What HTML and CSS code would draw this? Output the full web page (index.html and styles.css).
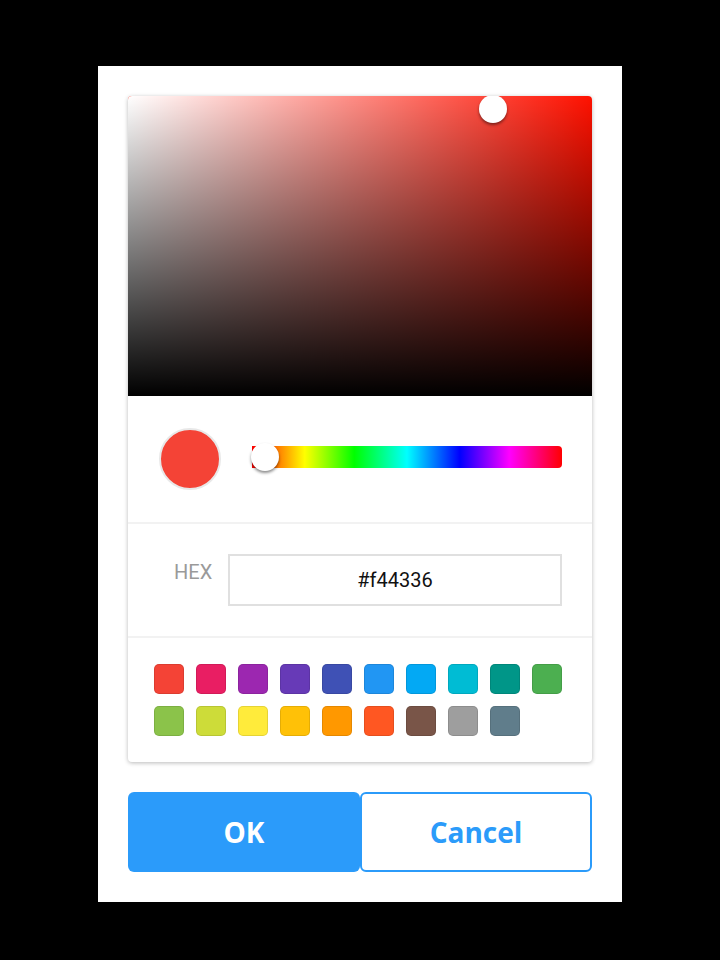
FILE: index.html
```html
<!DOCTYPE html>
<html>
<head>
<meta charset="utf-8">
<link rel="stylesheet" href="styles.css">
</head>
<body>
<div class="dialog">
  <div class="card">
    <div class="sv">
      <div class="sv-white"></div>
      <div class="sv-black"></div>
      <div class="sv-thumb"></div>
    </div>
    <div class="hue-row">
      <div class="preview"></div>
      <div class="hue-wrap">
        <div class="hue-track"></div>
        <div class="hue-thumb"></div>
      </div>
    </div>
    <div class="hex-row">
      <span class="hex-label">HEX</span>
      <div class="hex-input">#f44336</div>
    </div>
    <div class="swatches">
      <span class="sw" style="background:#f44336"></span>
      <span class="sw" style="background:#e91e63"></span>
      <span class="sw" style="background:#9c27b0"></span>
      <span class="sw" style="background:#673ab7"></span>
      <span class="sw" style="background:#3f51b5"></span>
      <span class="sw" style="background:#2196f3"></span>
      <span class="sw" style="background:#03a9f4"></span>
      <span class="sw" style="background:#00bcd4"></span>
      <span class="sw" style="background:#009688"></span>
      <span class="sw" style="background:#4caf50"></span>
      <span class="sw" style="background:#8bc34a"></span>
      <span class="sw" style="background:#cddc39"></span>
      <span class="sw" style="background:#ffeb3b"></span>
      <span class="sw" style="background:#ffc107"></span>
      <span class="sw" style="background:#ff9800"></span>
      <span class="sw" style="background:#ff5722"></span>
      <span class="sw" style="background:#795548"></span>
      <span class="sw" style="background:#9e9e9e"></span>
      <span class="sw" style="background:#607d8b"></span>
    </div>
  </div>
  <div class="buttons">
    <div class="btn ok">OK</div>
    <div class="btn cancel">Cancel</div>
  </div>
</div>
</body>
</html>
```

FILE: styles.css
```css
html, body {
  margin: 0;
  padding: 0;
  background: #000;
  width: 720px;
  height: 960px;
}
body {
  display: flex;
  justify-content: center;
  padding-top: 66px;
  box-sizing: border-box;
  font-family: Roboto, "Liberation Sans", sans-serif;
}
.dialog {
  width: 524px;
  height: 836px;
  background: #fff;
  padding: 30px;
  box-sizing: border-box;
}
.card {
  width: 464px;
  height: 666px;
  border-radius: 4px;
  background: #fff;
  box-shadow: 0 1px 4px rgba(0,0,0,0.28);
  overflow: hidden;
}
.sv {
  position: relative;
  height: 300px;
  background: #ff1100;
}
.sv-white {
  position: absolute;
  inset: 0;
  background: linear-gradient(to right, #fff, rgba(255,255,255,0));
}
.sv-black {
  position: absolute;
  inset: 0;
  background: linear-gradient(to bottom, rgba(0,0,0,0), #000);
}
.sv-thumb {
  position: absolute;
  left: 351px;
  top: -1px;
  width: 28px;
  height: 28px;
  border-radius: 50%;
  background: #fff;
  box-shadow: 0 2px 3px rgba(0,0,0,0.45);
}
.hue-row {
  height: 128px;
  display: flex;
  align-items: center;
  padding: 0 30px 0 31px;
  border-bottom: 2px solid #f2f2f2;
  box-sizing: border-box;
}
.preview {
  width: 62px;
  height: 62px;
  border-radius: 50%;
  background: #f44336;
  box-sizing: border-box;
  border: 2px solid #e8e8e8;
}
.hue-wrap {
  position: relative;
  margin-left: 31px;
  margin-top: -4px;
  width: 310px;
  height: 22px;
}
.hue-track {
  height: 22px;
  border-radius: 0 4px 4px 0;
  background: linear-gradient(to right, #ff0000 0%, #ffff00 17%, #00ff00 33%, #00ffff 50%, #0000ff 67%, #ff00ff 83%, #ff0000 100%);
}
.hue-thumb {
  position: absolute;
  left: -1px;
  top: -3px;
  width: 28px;
  height: 28px;
  border-radius: 50%;
  background: #fff;
  box-shadow: 0 2px 3px rgba(0,0,0,0.45);
}
.hex-row {
  height: 114px;
  display: flex;
  align-items: center;
  padding: 0 30px 0 46px;
  border-bottom: 2px solid #f2f2f2;
  box-sizing: border-box;
}
.hex-label {
  font-size: 20px;
  color: #9a9a9a;
  width: 54px;
  margin-top: -17px;
}
.hex-input {
  flex: 1;
  height: 52px;
  border: 2px solid #e0e0e0;
  box-sizing: border-box;
  display: flex;
  align-items: center;
  justify-content: center;
  font-size: 20px;
  color: #111;
}
.swatches {
  display: grid;
  grid-template-columns: repeat(10, 30px);
  column-gap: 12px;
  row-gap: 12px;
  padding: 26px 26px 0 26px;
}
.sw {
  width: 30px;
  height: 30px;
  border-radius: 5px;
  box-sizing: border-box;
  box-shadow: inset 0 0 0 1px rgba(0,0,0,0.1);
}
.buttons {
  display: flex;
  margin-top: 30px;
}
.btn {
  width: 232px;
  height: 80px;
  box-sizing: border-box;
  border-radius: 6px;
  display: flex;
  align-items: center;
  justify-content: center;
  font-family: "Open Sans", "Liberation Sans", sans-serif;
  font-weight: bold;
  font-size: 28px;
}
.ok {
  background: #2b9bfa;
  color: #fff;
}
.cancel {
  border: 2px solid #2b9bfa;
  color: #2b9bfa;
  background: #fff;
}
```
